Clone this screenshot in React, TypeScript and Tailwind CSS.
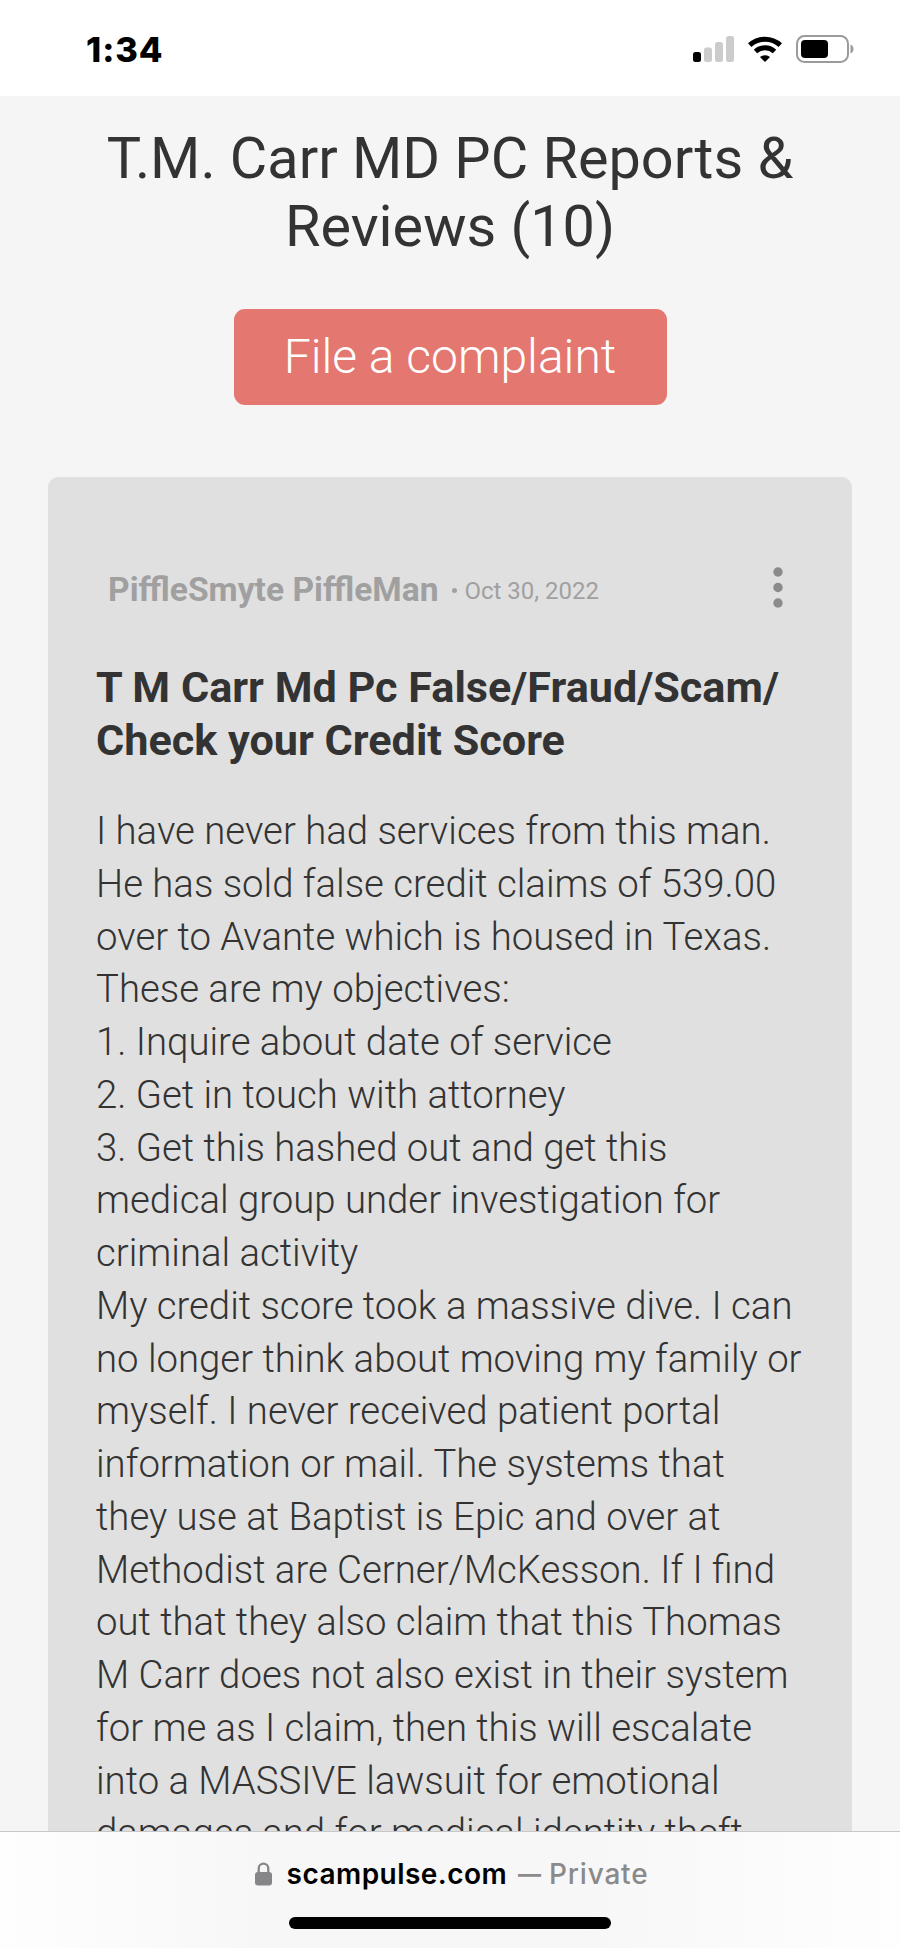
import React from 'react';

const reviewLines = [
  'I have never had services from this man.',
  'He has sold false credit claims of 539.00',
  'over to Avante which is housed in Texas.',
  'These are my objectives:',
  '1. Inquire about date of service',
  '2. Get in touch with attorney',
  '3. Get this hashed out and get this',
  'medical group under investigation for',
  'criminal activity',
  'My credit score took a massive dive. I can',
  'no longer think about moving my family or',
  'myself. I never received patient portal',
  'information or mail. The systems that',
  'they use at Baptist is Epic and over at',
  'Methodist are Cerner/McKesson. If I find',
  'out that they also claim that this Thomas',
  'M Carr does not also exist in their system',
  'for me as I claim, then this will escalate',
  'into a MASSIVE lawsuit for emotional',
  'damages and for medical identity theft.',
];

const StatusBar: React.FC = () => (
  <header className="h-24 shrink-0 bg-white flex items-center justify-between pl-[86px] pr-[45px]">
    <span className="pt-[3px] font-[Inter] font-extrabold text-[34.5px] tracking-[0.9px] text-black">1:34</span>
    <div className="flex items-center pt-[2px]">
      <svg className="mr-[14px]" width="41" height="26" viewBox="0 0 41 26">
        <rect x="0" y="16" width="8" height="10" rx="2.5" fill="#000" />
        <rect x="11" y="11.5" width="8" height="14.5" rx="2.5" fill="#ccc" />
        <rect x="22" y="6" width="8" height="20" rx="2.5" fill="#ccc" />
        <rect x="33" y="0" width="8" height="26" rx="2.5" fill="#ccc" />
      </svg>
      <svg className="mr-[14px]" width="34" height="26" viewBox="0 0 34 26" fill="none" stroke="#000" strokeWidth="5">
        <path d="M1.7 9.2a22.5 22.5 0 0 1 30.6 0M7.5 15.5a14 14 0 0 1 19 0" />
        <path d="M17 26l-4.6-4.5q-.4-.6.3-1a8 8 0 0 1 8.6 0q.7.4.3 1z" fill="#000" stroke="none" />
      </svg>
      <svg width="59" height="28" viewBox="0 0 59 28">
        <rect x="1" y="1" width="51" height="26" rx="7.5" fill="none" stroke="#9b9b9b" strokeWidth="2" />
        <rect x="5" y="5" width="27" height="18" rx="4" fill="#000" />
        <path d="M54.5 9.5v9q3-1.5 3-4.5t-3-4.5" fill="#9b9b9b" />
      </svg>
    </div>
  </header>
);

export default function App() {
  return (
    <div className="w-[900px] h-[1948px] overflow-hidden bg-[#f5f5f5] flex flex-col font-[Roboto,sans-serif] text-[#333]">
      <StatusBar />

      <main className="h-[1735px] shrink-0 overflow-hidden flex flex-col items-center">
        <h1 className="mt-[29px] text-center text-[57.6px] leading-[67.5px] whitespace-nowrap">
          T.M. Carr MD PC Reports &amp;<br />Reviews (10)
        </h1>
        <button className="mt-[49px] w-[433px] h-[96px] shrink-0 rounded-[11px] bg-[#e47770] text-white font-light text-[48px]">
          File a complaint
        </button>

        <article className="mt-[72px] w-[804px] h-[1500px] shrink-0 rounded-t-[10px] bg-[#e0e0e0] px-12 pt-[84px]">
          <div className="flex items-center h-[58px] pl-3 text-[#a0a0a0]">
            <span className="text-[33.6px] font-bold whitespace-nowrap">PiffleSmyte PiffleMan</span>
            <span className="ml-[14px] size-[5px] rounded-full bg-[#a0a0a0]" />
            <span className="ml-[7px] mt-px text-[24px] whitespace-nowrap">Oct 30, 2022</span>
            <svg className="ml-auto mr-[21px] mb-[5px]" width="10" height="41" viewBox="0 0 10 41" fill="#8b8b8b">
              <circle cx="5" cy="5" r="4.7" />
              <circle cx="5" cy="20.5" r="4.7" />
              <circle cx="5" cy="36" r="4.7" />
            </svg>
          </div>
          <h2 className="mt-[42px] text-[43.2px] leading-[53px] font-bold whitespace-nowrap">
            T M Carr Md Pc False/Fraud/Scam/<br />Check your Credit Score
          </h2>
          <div className="mt-[38px] text-[38.35px] leading-[52.75px] font-light whitespace-nowrap">
            {reviewLines.map((line) => (
              <p key={line}>{line}</p>
            ))}
          </div>
        </article>
      </main>

      <footer className="h-[117px] shrink-0 border-t border-[#c8c8c8] bg-[linear-gradient(to_right,#fefefe,#f7f7f7_30%,#f7f7f7_65%,#fefefe)] flex flex-col items-center font-[Inter]">
        <div className="mt-[22px] ml-[3px] flex items-center text-[28px] leading-10 whitespace-nowrap">
          <svg className="mr-[15px]" width="17" height="24" viewBox="0 0 17 24">
            <rect x="0" y="10" width="17" height="13.5" rx="3" fill="#868688" />
            <path d="M3.7 11V6.5a4.8 4.8 0 0 1 9.6 0V11" fill="none" stroke="#868688" strokeWidth="2.3" />
          </svg>
          <span className="font-semibold tracking-[0.45px] text-black">scampulse.com</span>
          <span className="ml-[11px] text-[23px] font-bold text-[#8a8a8a]">—</span>
          <span className="ml-2 font-medium tracking-[0.8px] text-[#8a8a8a]">Private</span>
        </div>
        <div className="mt-[23px] w-[322px] h-3 rounded-full bg-black" />
      </footer>
    </div>
  );
}
